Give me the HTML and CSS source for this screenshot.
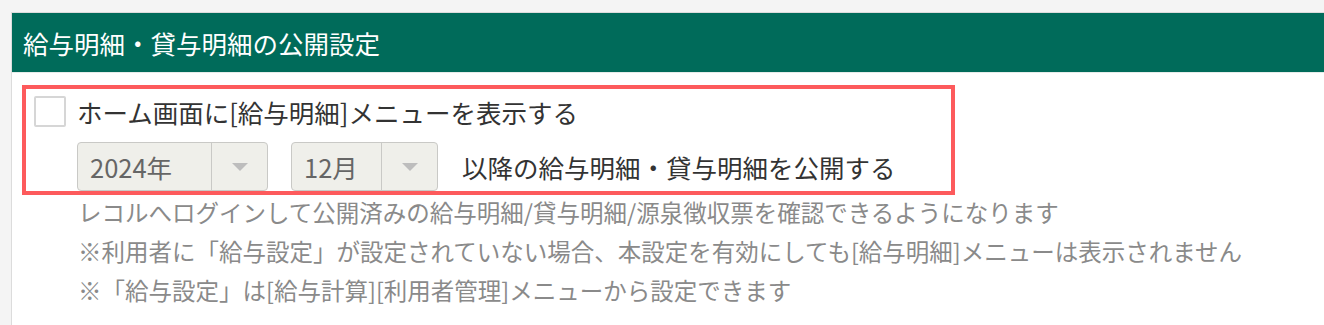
FILE: index.html
```html
<!DOCTYPE html>
<html lang="ja">
<head>
<meta charset="utf-8">
<title>給与明細・貸与明細の公開設定</title>
<link rel="stylesheet" href="styles.css">
</head>
<body>
<div class="panel">
  <div class="panel-header">給与明細・貸与明細の公開設定</div>
  <div class="panel-body">
    <div class="highlight">
      <label class="check-row">
        <span class="checkbox"></span>
        <span class="label-text">ホーム画面に[給与明細]メニューを表示する</span>
      </label>
      <div class="select-row">
        <div class="select select-year">
          <span class="select-value">2024年</span>
          <span class="select-arrow"><span class="triangle"></span></span>
        </div>
        <div class="select select-month">
          <span class="select-value">12月</span>
          <span class="select-arrow"><span class="triangle"></span></span>
        </div>
        <span class="label-text">以降の給与明細・貸与明細を公開する</span>
      </div>
    </div>
    <div class="notes">
      <p>レコルへログインして公開済みの給与明細/貸与明細/源泉徴収票を確認できるようになります</p>
      <p>※利用者に「給与設定」が設定されていない場合、本設定を有効にしても[給与明細]メニューは表示されません</p>
      <p>※「給与設定」は[給与計算][利用者管理]メニューから設定できます</p>
    </div>
  </div>
</div>
</body>
</html>
```

FILE: styles.css
```css
html, body {
  margin: 0;
  padding: 0;
  height: 100%;
}
body {
  background: #f4f4f4;
  font-family: "Noto Sans CJK JP", "Noto Sans", sans-serif;
  overflow: hidden;
}
.panel {
  margin: 12px 0 0 11px;
  border-left: 1px solid #dcdcdc;
  border-top: 1px solid #dcdcdc;
  background: #ffffff;
  height: calc(100% - 12px);
  box-sizing: border-box;
}
.panel-header {
  height: 59px;
  background: #006b5a;
  color: #ffffff;
  font-size: 25.5px;
  display: flex;
  align-items: center;
  padding-left: 11px;
  border-bottom: 1px solid #e6ecea;
}
.panel-body {
  padding: 12px 0 0 10px;
}
.highlight {
  width: 933px;
  box-sizing: border-box;
  border: 4px solid #fd5a5c;
  padding: 7px 0 0 8px;
}
.check-row {
  display: flex;
  align-items: center;
  height: 31px;
  gap: 11px;
}
.checkbox {
  width: 32px;
  height: 31px;
  box-sizing: border-box;
  border: 2px solid #d6d6d6;
  border-radius: 2px;
  background: #ffffff;
  flex: none;
}
.label-text {
  font-size: 25.5px;
  color: #333333;
  line-height: 1;
  white-space: nowrap;
}
.select-row {
  display: flex;
  align-items: center;
  margin: 15px 0 0 43px;
  gap: 23px;
  height: 49px;
}
.select {
  display: flex;
  height: 49px;
  box-sizing: border-box;
  border: 1px solid #c9c9c6;
  border-radius: 4px;
  background: #efefea;
  color: #666666;
}
.select-year { width: 191px; }
.select-month { width: 147px; }
.select-value {
  flex: 1;
  display: flex;
  align-items: center;
  padding-left: 12px;
  font-size: 25.5px;
}
.select-arrow {
  width: 55px;
  border-left: 1px solid #c9c9c6;
  display: flex;
  align-items: center;
  justify-content: center;
}
.triangle {
  width: 0;
  height: 0;
  border-left: 8px solid transparent;
  border-right: 8px solid transparent;
  border-top: 8px solid #bdbdbd;
}
.select-row .label-text {
  margin-left: 1px;
}
.notes {
  margin: -2px 0 0 56px;
  color: #8a8a8a;
  font-size: 23.5px;
  line-height: 39px;
}
.notes p {
  margin: 0;
  white-space: nowrap;
}
```
